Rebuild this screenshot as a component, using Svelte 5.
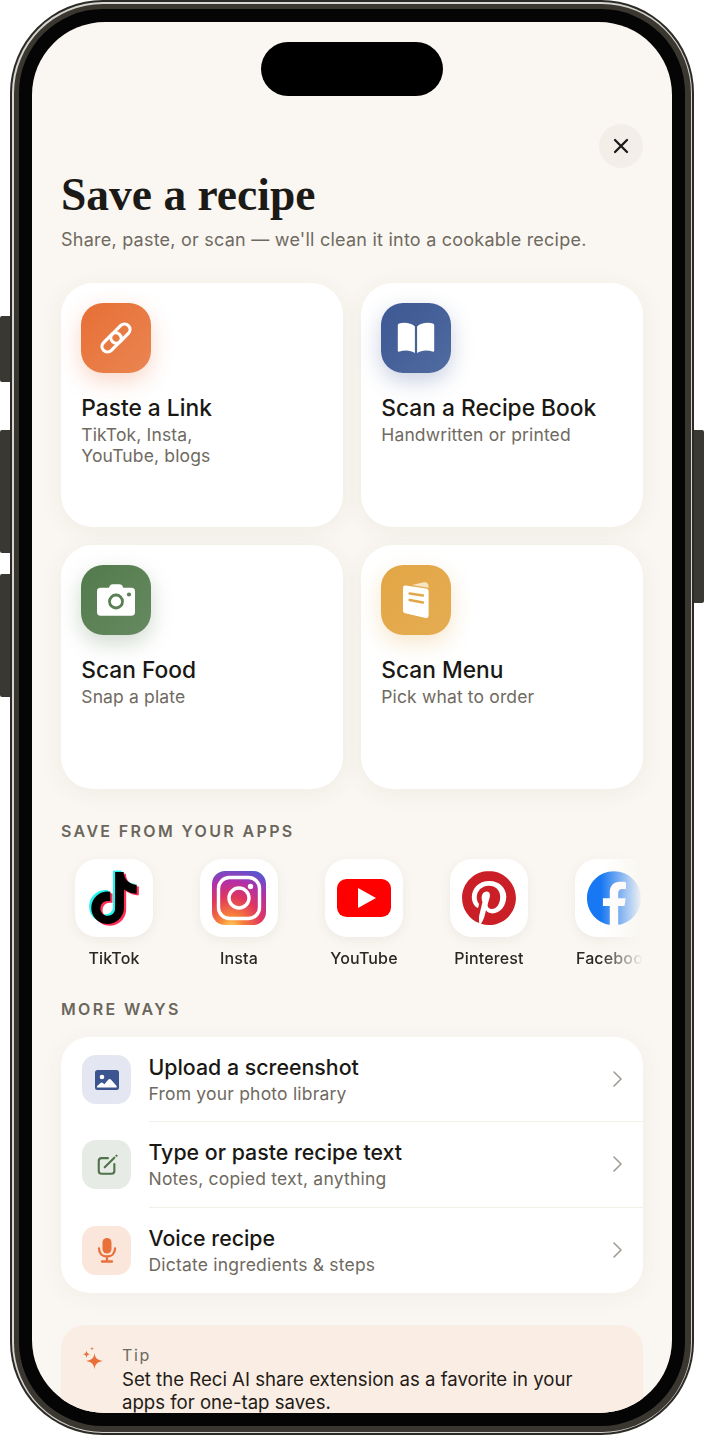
<script>
  const cards = [
    { key: 'link', title: 'Paste a Link', sub: 'TikTok, Insta,\nYouTube, blogs' },
    { key: 'book', title: 'Scan a Recipe Book', sub: 'Handwritten or printed' },
    { key: 'camera', title: 'Scan Food', sub: 'Snap a plate' },
    { key: 'menu', title: 'Scan Menu', sub: 'Pick what to order' }
  ];
  const apps = ['TikTok', 'Insta', 'YouTube', 'Pinterest', 'Facebook'];
  const rows = [
    { key: 'image', title: 'Upload a screenshot', sub: 'From your photo library' },
    { key: 'note', title: 'Type or paste recipe text', sub: 'Notes, copied text, anything' },
    { key: 'mic', title: 'Voice recipe', sub: 'Dictate ingredients & steps' }
  ];
  const tiktok = 'M12.525.02c1.31-.02 2.61-.01 3.91-.02.08 1.53.63 3.09 1.75 4.17 1.12 1.11 2.7 1.62 4.24 1.79v4.03c-1.44-.05-2.89-.35-4.2-.97-.57-.26-1.1-.59-1.62-.93-.01 2.92.01 5.84-.02 8.75-.08 1.4-.54 2.79-1.35 3.94-1.31 1.92-3.58 3.17-5.91 3.21-1.43.08-2.86-.31-4.08-1.03-2.02-1.19-3.44-3.37-3.65-5.71-.02-.5-.03-1-.01-1.49.18-1.9 1.12-3.72 2.58-4.96 1.66-1.44 3.98-2.13 6.15-1.72.02 1.48-.04 2.96-.04 4.44-.99-.32-2.15-.23-3.02.37-.63.41-1.11 1.04-1.36 1.75-.21.51-.15 1.07-.14 1.61.24 1.64 1.82 3.02 3.5 2.87 1.12-.01 2.19-.66 2.77-1.61.19-.33.4-.67.41-1.06.1-1.79.06-3.57.07-5.36.01-4.03-.01-8.05.02-12.07z';
</script>

<div class="page">
  <div class="btn left b1"></div>
  <div class="btn left b2"></div>
  <div class="btn left b3"></div>
  <div class="btn right b4"></div>

  <div class="device">
    <div class="ring-light">
      <div class="ring-dark">
        <div class="bezel">
          <div class="screen">
            <div class="island"></div>

            <div class="topbar">
              <button class="close" aria-label="Close">
                <svg width="16" height="16" viewBox="0 0 16 16" fill="none" stroke="#1c1a16" stroke-width="2.3" stroke-linecap="round">
                  <path d="M2 2l12 12M14 2L2 14" />
                </svg>
              </button>
            </div>

            <h1>Save a recipe</h1>
            <p class="lead">Share, paste, or scan — we'll clean it into a cookable recipe.</p>

            <div class="grid">
              {#each cards as c}
                <div class="card">
                  <div class="tile {c.key}">
                    {#if c.key === 'link'}
                      <svg width="42" height="42" viewBox="-21 -21 42 42" fill="none" stroke="#fff" stroke-width="3.2">
                        <g transform="rotate(45)">
                          <rect x="-5.500" y="-17.500" width="11" height="22.500" rx="5.500" />
                          <rect x="-5.500" y="-5" width="11" height="22.500" rx="5.500" />
                        </g>
                      </svg>
                    {:else if c.key === 'book'}
                      <svg width="40" height="40" viewBox="0 0 40 40" fill="#fff">
                        <path d="M18.900 8.500C16.500 6 12.500 4.800 8 4.800c-1.800 0-3.400.2-4.700.6-1 .3-1.500 1-1.500 2v25.100c0 1 .9 1.500 1.800 1.100 4.700-1.900 11.400-1.500 15.300 1.400z" />
                        <path d="M21.100 8.500C23.500 6 27.500 4.800 32 4.800c1.800 0 3.400.2 4.700.6 1 .3 1.500 1 1.500 2v25.100c0 1-.9 1.500-1.800 1.100-4.700-1.900-11.400-1.500-15.300 1.400z" />
                      </svg>
                    {:else if c.key === 'camera'}
                      <svg width="40" height="34" viewBox="0 0 40 34">
                        <path fill="#fff" fill-rule="evenodd" d="M13.500 3.500c.6-1.500 1.700-2.300 3.300-2.300h6.600c1.600 0 2.700.8 3.300 2.300l.6 1.300h8.200c2.300 0 3.500 1.300 3.500 3.500v21c0 2.200-1.200 3.500-3.500 3.500H4.500C2.200 32.800 1 31.500 1 29.300v-21C1 6.100 2.200 4.800 4.500 4.800h8.400z" />
                        <circle cx="20" cy="18.500" r="6.500" fill="none" stroke="#5b7f55" stroke-width="2.800" />
                        <circle cx="33" cy="11.500" r="2.100" fill="#5b7f55" />
                      </svg>
                    {:else}
                      <svg width="28" height="39" viewBox="-1 -1 28 39">
                        <path fill="#f7e6c6" d="M9 3 21 .3c2-.4 3.800.5 4.200 2.500l.5 3z" />
                        <path fill="#fff" d="M2.600 3.600 23 6.600c1.700.3 2.600 1.300 2.600 3V33.500c0 1.800-1.200 2.900-3 2.500L2.300 31.300C.8 31 0 30 0 28.500V5.800C0 4.200 1 3.400 2.600 3.600z" />
                        <path stroke="#e2a748" stroke-width="2.300" stroke-linecap="round" d="M6.500 11.500 20 13.500M6.500 18 20 20.500" />
                      </svg>
                    {/if}
                  </div>
                  <div class="card-title">{c.title}</div>
                  <div class="card-sub">{c.sub}</div>
                </div>
              {/each}
            </div>

            <div class="label first">SAVE FROM YOUR APPS</div>

            <div class="apps">
              {#each apps as a}
                <div class="app">
                  <div class="app-icon">
                    {#if a === 'TikTok'}
                      <svg width="60" height="60" viewBox="-1.800 -1.800 27.600 27.600">
                        <path fill="#25f4ee" d={tiktok} transform="translate(-1 -.6)" />
                        <path fill="#fe2c55" d={tiktok} transform="translate(1 .8)" />
                        <path fill="#000" d={tiktok} />
                      </svg>
                    {:else if a === 'Insta'}
                      <svg width="54" height="54" viewBox="0 0 54 54">
                        <defs>
                          <radialGradient id="ig" cx="0.35" cy="1.05" r="1.15">
                            <stop offset="0" stop-color="#fdd75a" />
                            <stop offset="0.2" stop-color="#f8813a" />
                            <stop offset="0.5" stop-color="#e0365f" />
                            <stop offset="0.75" stop-color="#b32fa8" />
                            <stop offset="1" stop-color="#4f5bd5" />
                          </radialGradient>
                        </defs>
                        <rect width="54" height="54" rx="13" fill="url(#ig)" />
                        <rect x="6.500" y="6.500" width="41" height="41" rx="11" fill="none" stroke="#fff" stroke-width="3.400" />
                        <circle cx="27" cy="27" r="10" fill="none" stroke="#fff" stroke-width="3.400" />
                        <circle cx="38.500" cy="15.500" r="2.700" fill="#fff" />
                      </svg>
                    {:else if a === 'YouTube'}
                      <svg width="54" height="38" viewBox="0 0 54 38">
                        <rect width="54" height="38" rx="9.500" fill="#ff0000" />
                        <path d="M21 9 39 19 21 29z" fill="#fff" />
                      </svg>
                    {:else if a === 'Pinterest'}
                      <svg width="54" height="54" viewBox="0 0 24 24">
                        <path fill="#cb1f27" d="M12.017 0C5.396 0 .029 5.367.029 11.987c0 5.079 3.158 9.417 7.618 11.162-.105-.949-.199-2.403.041-3.439.219-.937 1.406-5.957 1.406-5.957s-.359-.72-.359-1.781c0-1.663.967-2.911 2.168-2.911 1.024 0 1.518.769 1.518 1.688 0 1.029-.653 2.567-.992 3.992-.285 1.193.6 2.165 1.775 2.165 2.128 0 3.768-2.245 3.768-5.487 0-2.861-2.063-4.869-5.008-4.869-3.41 0-5.409 2.562-5.409 5.199 0 1.033.394 2.143.889 2.741.099.12.112.225.085.345-.09.375-.293 1.199-.334 1.363-.053.225-.172.271-.401.165-1.495-.69-2.433-2.878-2.433-4.646 0-3.776 2.748-7.252 7.92-7.252 4.158 0 7.392 2.967 7.392 6.923 0 4.135-2.607 7.462-6.233 7.462-1.214 0-2.354-.629-2.758-1.379l-.749 2.848c-.269 1.045-1.004 2.352-1.498 3.146 1.123.345 2.306.535 3.55.535 6.607 0 11.985-5.365 11.985-11.987C23.97 5.39 18.592.026 11.985.026L12.017 0z" />
                      </svg>
                    {:else}
                      <svg width="54" height="54" viewBox="0 0 24 24">
                        <path fill="#1877f2" d="M24 12.073c0-6.627-5.373-12-12-12s-12 5.373-12 12c0 5.99 4.388 10.954 10.125 11.854v-8.385H7.078v-3.47h3.047V9.43c0-3.007 1.792-4.669 4.533-4.669 1.312 0 2.686.235 2.686.235v2.953H15.830c-1.491 0-1.956.925-1.956 1.874v2.25h3.328l-.532 3.47h-2.796v8.385C19.612 23.027 24 18.062 24 12.073z" />
                      </svg>
                    {/if}
                  </div>
                  <div class="app-name">{a}</div>
                </div>
              {/each}
            </div>

            <div class="label second">MORE WAYS</div>

            <div class="list">
              {#each rows as r}
                <div class="row">
                  <div class="row-icon {r.key}">
                    {#if r.key === 'image'}
                      <svg width="24" height="20" viewBox="0 0 24 20">
                        <rect width="24" height="20" rx="2.500" fill="#3c5590" />
                        <circle cx="7" cy="7" r="2.300" fill="#fff" />
                        <path fill="#fff" d="M1.800 17.500c0-.8.2-1.200.7-1.700l3-2.800c.8-.7 1.700-.7 2.400 0l1.500 1.300 3.800-4.500c.9-1 2-1 2.900 0l5.100 5.800c.4.500.6 1 .6 1.900z" />
                      </svg>
                    {:else if r.key === 'note'}
                      <svg width="22" height="22" viewBox="0 0 24 24" fill="none" stroke="#4f734a" stroke-width="2.300" stroke-linecap="round" stroke-linejoin="round">
                        <path d="M13 4.500H6C4 4.500 3 5.500 3 7.500v11c0 2 1 3 3 3h11c2 0 3-1 3-3V11" />
                        <path d="M9.500 14.500 20 4" />
                        <path d="M22.300 1.900l.1-.1" />
                      </svg>
                    {:else}
                      <svg width="20" height="26" viewBox="0 0 20 26" fill="none" stroke="#e8703a" stroke-width="2.300" stroke-linecap="round">
                        <rect x="5.500" y="1" width="9" height="15.500" rx="4.500" fill="#e8703a" stroke="none" />
                        <path d="M2 11.500c0 5 3.500 8 8 8s8-3 8-8M10 19.500v4.500M5 24.500h10" />
                      </svg>
                    {/if}
                  </div>
                  <div class="row-body">
                    <div class="row-text">
                      <div class="row-title">{r.title}</div>
                      <div class="row-sub">{r.sub}</div>
                    </div>
                    <svg class="chev" width="11" height="18" viewBox="0 0 11 18" fill="none" stroke="#a19c93" stroke-width="1.600" stroke-linecap="round" stroke-linejoin="round">
                      <path d="M2 2l7 7-7 7" />
                    </svg>
                  </div>
                </div>
              {/each}
            </div>

            <div class="tip">
              <svg class="spark" width="24" height="26" viewBox="0 0 24 26" fill="#e8703a">
                <path d="M12.500 7c.7 5 2.300 6.800 8.500 8-6.200 1.200-7.800 3-8.500 8.500-.7-5.500-2.300-7.300-8.500-8.500 6.200-1.200 7.800-3 8.500-8z" />
                <path d="M4.500 4.500c.4 2.500 1 3.100 3.500 3.700C5.500 8.700 4.900 9.400 4.500 12c-.4-2.600-1-3.300-3.500-3.800 2.500-.6 3.100-1.200 3.500-3.700z" />
                <path d="M10 .8c.2 1.300.5 1.700 1.800 1.900-1.300.3-1.600.6-1.800 1.900-.2-1.300-.5-1.600-1.800-1.900C9.500 2.500 9.800 2.100 10 .8z" />
              </svg>
              <div>
                <div class="tip-label">Tip</div>
                <div class="tip-text">Set the Reci AI share extension as a favorite in your apps for one-tap saves.</div>
              </div>
            </div>
          </div>
        </div>
      </div>
    </div>
  </div>
</div>

<style>
  :global(body) { margin: 0; background: #fff; }
  * { box-sizing: border-box; }

  .page {
    position: relative;
    width: 704px;
    height: 1435px;
    padding-left: 10px;
    font-family: Inter, "Liberation Sans", sans-serif;
    overflow: hidden;
  }
  .btn { position: absolute; width: 10px; background: #3a3832; }
  .left { left: 0; border-radius: 2px 0 0 2px; }
  .right { right: 0; border-radius: 0 2px 2px 0; }
  .b1 { top: 316px; height: 66px; }
  .b2 { top: 430px; height: 123px; }
  .b3 { top: 574px; height: 123px; }
  .b4 { top: 430px; height: 173px; }

  .device { width: 684px; height: 1435px; border-radius: 93px; background: #2c2a26; padding: 2px; }
  .ring-light { height: 100%; border-radius: 91px; background: #d6d4ce; padding: 1.5px; }
  .ring-dark { height: 100%; border-radius: 89px; background: #3a3730; padding: 5.5px; }
  .bezel { height: 100%; border-radius: 84px; background: #050505; padding: 13px; }

  .screen {
    position: relative;
    height: 100%;
    border-radius: 73px;
    background: #faf7f2;
    overflow: hidden;
    padding: 102px 29px 0;
  }
  .island {
    position: absolute;
    top: 20px;
    left: 229px;
    width: 182px;
    height: 54px;
    border-radius: 27px;
    background: #000;
  }

  .topbar { display: flex; justify-content: flex-end; height: 44px; }
  .close {
    width: 44px;
    height: 44px;
    border: 0;
    padding: 0;
    border-radius: 50%;
    background: #f3eee8;
    display: flex;
    align-items: center;
    justify-content: center;
  }

  h1 {
    margin: 0;
    font-family: "Liberation Serif", serif;
    font-weight: 700;
    font-size: 45.500px;
    line-height: 54px;
    color: #1c1a16;
  }
  .lead {
    margin: 4px 0 0;
    font-size: 18px;
    line-height: 28px;
    letter-spacing: 0.23px;
    color: #6f6a61;
  }

  .grid {
    margin-top: 29px;
    display: grid;
    grid-template-columns: 282px 282px;
    grid-auto-rows: 244px;
    gap: 18px;
  }
  .card {
    background: #fff;
    border-radius: 32px;
    padding: 20px 20.250px;
    box-shadow: 0 4px 24px rgba(70, 60, 40, 0.06);
  }
  .tile {
    width: 70px;
    height: 70px;
    border-radius: 22px;
    display: flex;
    align-items: center;
    justify-content: center;
  }
  .tile.link { background: linear-gradient(135deg, #e76f35, #ea8552); box-shadow: 0 8px 22px rgba(232, 112, 58, 0.28); }
  .tile.book { background: linear-gradient(135deg, #3d5893, #4f6ba0); box-shadow: 0 8px 22px rgba(60, 85, 144, 0.28); }
  .tile.camera { background: linear-gradient(135deg, #527a4c, #668a60); box-shadow: 0 8px 22px rgba(85, 122, 80, 0.28); }
  .tile.menu { background: linear-gradient(135deg, #e2a645, #e5ac52); box-shadow: 0 8px 22px rgba(226, 166, 69, 0.28); }
  .card-title {
    margin-top: 20px;
    font-size: 22.750px;
    line-height: 30px;
    font-weight: 550;
    color: #1a1814;
  }
  .card-sub {
    margin-top: 1px;
    font-size: 17.500px;
    line-height: 21px;
    letter-spacing: 0.15px;
    color: #6f6a61;
    white-space: pre-line;
  }

  .label {
    font-size: 16px;
    line-height: 20px;
    font-weight: 600;
    letter-spacing: 2.350px;
    color: #6b665c;
  }
  .first { margin-top: 32px; }

  .apps {
    margin: 8px 0 0;
    padding: 10px 0 12px;
    display: flex;
    gap: 19px;
    overflow: hidden;
    -webkit-mask-image: linear-gradient(to right, #000 540px, transparent 582px);
    mask-image: linear-gradient(to right, #000 540px, transparent 582px);
  }
  .app { flex: none; width: 106px; display: flex; flex-direction: column; align-items: center; }
  .app-icon {
    width: 78px;
    height: 78px;
    border-radius: 22px;
    background: #fff;
    display: flex;
    align-items: center;
    justify-content: center;
    box-shadow: 0 3px 12px rgba(70, 60, 40, 0.07);
  }
  .app-name { margin-top: 11px; font-size: 16px; line-height: 20px; font-weight: 500; letter-spacing: 0.15px; color: #2a2722; white-space: nowrap; }

  .second { margin-top: 19px; }

  .list {
    margin-top: 18px;
    background: #fff;
    border-radius: 28px;
    box-shadow: 0 4px 24px rgba(70, 60, 40, 0.05);
    overflow: hidden;
  }
  .row { display: flex; align-items: stretch; padding-left: 21px; height: 85.330px; }
  .row-icon {
    flex: none;
    align-self: center;
    width: 49px;
    height: 49px;
    border-radius: 14px;
    display: flex;
    align-items: center;
    justify-content: center;
  }
  .row-icon.image { background: #e4e7f1; }
  .row-icon.note { background: #e7ebe5; }
  .row-icon.mic { background: #fbe6dc; }
  .row-body {
    flex: 1;
    margin-left: 17.500px;
    padding-right: 20px;
    display: flex;
    align-items: center;
    justify-content: space-between;
    border-bottom: 1px solid #f3efe9;
  }
  .row:last-child .row-body { border-bottom: 0; }
  .row-title { font-size: 21.350px; line-height: 27px; font-weight: 450; color: #1a1814; }
  .row-sub { margin-top: 1px; font-size: 17.500px; line-height: 23px; letter-spacing: 0.2px; color: #6f6a61; }

  .tip {
    margin-top: 32px;
    height: 130px;
    background: #faede3;
    border-radius: 24px;
    padding: 19px 22px;
    display: flex;
    gap: 16px;
  }
  .spark { flex: none; margin-top: 2px; margin-left: -1px; }
  .tip-label { font-size: 16px; line-height: 22px; font-weight: 400; letter-spacing: 1.600px; color: #6f6a61; }
  .tip-text { margin-top: 2px; font-size: 18.600px; line-height: 23px; color: #1f1c18; width: 480px; }
</style>
